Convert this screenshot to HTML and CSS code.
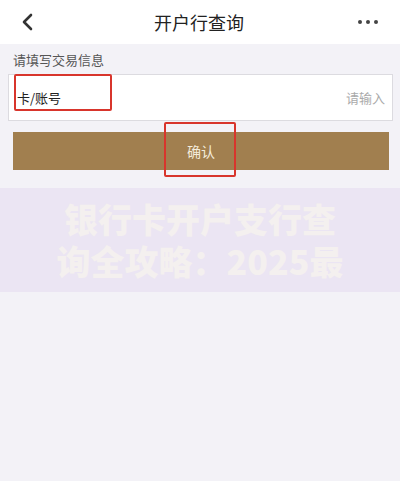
FILE: index.html
```html
<!DOCTYPE html>
<html lang="zh-CN">
<head>
  <meta charset="UTF-8">
  <meta name="viewport" content="width=device-width, initial-scale=1.0">
  <title>开户行查询</title>
  <link rel="stylesheet" href="styles.css">
</head>
<body>

  <header class="topbar">
    <a class="back" href="#">
      <svg width="14" height="18" viewBox="0 0 14 18"><path d="M11 2 L4 9 L11 16" fill="none" stroke="#333" stroke-width="2.6" stroke-linecap="round" stroke-linejoin="round"/></svg>
    </a>
    <div class="title">开户行查询</div>
    <div class="more"><span></span><span></span><span></span></div>
  </header>

  <main>
    <div class="hint">请填写交易信息</div>

    <div class="field">
      <span class="field-label">卡/账号</span>
      <input class="field-input" type="text" placeholder="请输入">
      <!-- red markup boxes from the screenshot -->
      <div class="mark mark-label"></div>
    </div>

    <div class="btn-wrap">
      <button class="confirm">确认</button>
      <div class="mark mark-btn"></div>
    </div>

    <div class="banner">
      <p>银行卡开户支行查</p>
      <p>询全攻略：2025最</p>
    </div>
  </main>

</body>
</html>
```

FILE: styles.css
```css
body {
  margin: 0;
  background-color: #f3f2f7;
  font-family: "Noto Sans CJK SC", "Noto Sans", sans-serif;
}

.topbar {
  height: 44px;
  background-color: #fff;
  display: flex;
  align-items: center;
  justify-content: space-between;
  padding: 0 22px 0 20px;
}
.back {
  display: flex;
  width: 30px;
}
.title {
  font-size: 18px;
  color: #222;
}
.more {
  display: flex;
  gap: 4px;
  width: 30px;
  justify-content: flex-end;
}
.more span {
  width: 4px;
  height: 4px;
  border-radius: 50%;
  background-color: #444;
}

.hint {
  font-size: 13px;
  color: #555;
  padding: 7px 13px 5px;
  line-height: 18px;
}

.field {
  position: relative;
  margin: 0 7px 0 8px;
  height: 45px;
  background-color: #fff;
  border: 1px solid #dcdbe0;
  display: flex;
  align-items: center;
  padding: 0 5px 0 8px;
}
.field-label {
  font-size: 13px;
  color: #222;
  width: 80px;
}
.field-input {
  flex: 1;
  border: none;
  outline: none;
  text-align: right;
  font-size: 13px;
  font-family: inherit;
  background: transparent;
}
.field-input::placeholder {
  color: #aaa;
}

.btn-wrap {
  position: relative;
  margin: 11px 11px 0 13px;
}
.confirm {
  display: block;
  width: 100%;
  height: 38px;
  border: none;
  background-color: #a17f4f;
  color: #f4ecdc;
  font-size: 14px;
  font-family: inherit;
}

.mark {
  position: absolute;
  border: 2px solid #d8352c;
  border-radius: 2px;
}
.mark-label {
  left: 5px;
  top: -1px;
  width: 94px;
  height: 33px;
}
.mark-btn {
  left: 151px;
  top: -10px;
  width: 68px;
  height: 51px;
}

.banner {
  margin-top: 18px;
  height: 104px;
  background-color: #ebe5f3;
  display: flex;
  flex-direction: column;
  justify-content: center;
  align-items: center;
}
.banner p {
  margin: 0;
  font-size: 34px;
  line-height: 42px;
  font-weight: 900;
  color: #f4f0ef;
}
```
